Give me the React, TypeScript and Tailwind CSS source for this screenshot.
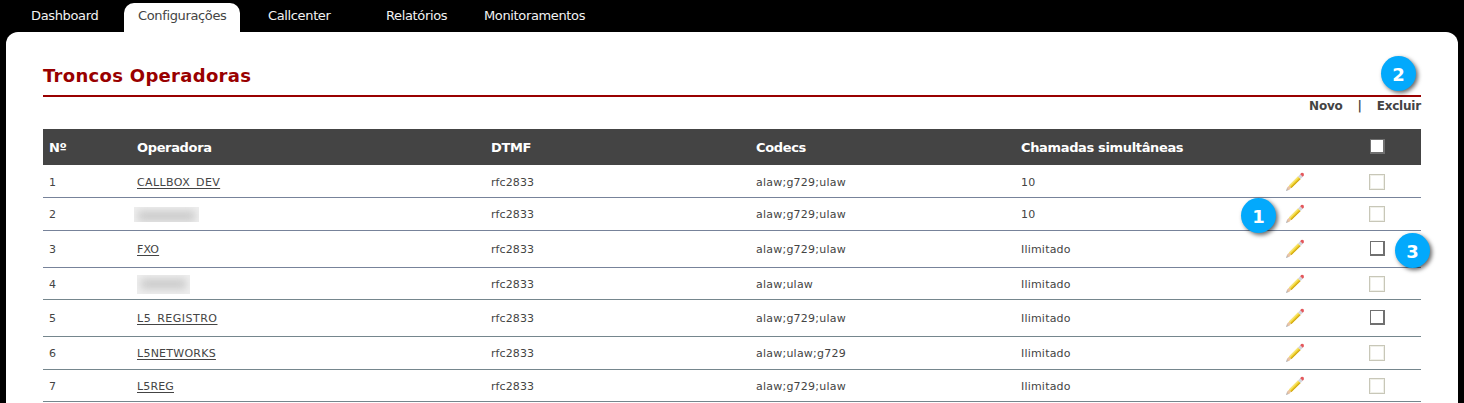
import clsx from "clsx";

interface Trunk {
  id: number;
  name: string | null;
  nameClass: string;
  codecs: string;
  calls: string;
  removable: boolean;
  rowClass: string;
}

const trunks: Trunk[] = [
  { id: 1, name: "CALLBOX_DEV", nameClass: "tracking-[0.4px]", codecs: "alaw;g729;ulaw", calls: "10", removable: false, rowClass: "h-[33px] pt-[2px] border-[#77839a]" },
  { id: 2, name: null, nameClass: "-mt-0.5 -ml-[3px] h-[15px] w-[65px]", codecs: "alaw;g729;ulaw", calls: "10", removable: false, rowClass: "h-[33px] border-[#77839a]" },
  { id: 3, name: "FXO", nameClass: "tracking-[0.1px]", codecs: "alaw;g729;ulaw", calls: "Ilimitado", removable: true, rowClass: "h-[37px] border-[#77839a]" },
  { id: 4, name: null, nameClass: "h-[19px] w-[53px]", codecs: "alaw;ulaw", calls: "Ilimitado", removable: false, rowClass: "h-8 border-[#75868d]" },
  { id: 5, name: "L5_REGISTRO", nameClass: "tracking-[0.5px]", codecs: "alaw;g729;ulaw", calls: "Ilimitado", removable: true, rowClass: "h-[37px] border-[#75868d]" },
  { id: 6, name: "L5NETWORKS", nameClass: "tracking-[0.25px]", codecs: "alaw;ulaw;g729", calls: "Ilimitado", removable: false, rowClass: "h-[33px] border-[#75868d]" },
  { id: 7, name: "L5REG", nameClass: "tracking-[0.15px]", codecs: "alaw;g729;ulaw", calls: "Ilimitado", removable: false, rowClass: "h-8 border-[#75868d]" },
];

const columns = "grid grid-cols-[88px_354px_265px_265px_265px_53px_88px] items-center";

function PencilIcon() {
  return (
    <svg width="20" height="20" viewBox="0 0 20 20" className="-ml-px">
      <path d="M1 19 2.2 15.6 4.4 17.8Z" fill="#aaa9aa" />
      <path d="M2.2 15.6 4.2 13.4 6.4 15.6 4.4 17.8 2.5 18Z" fill="#eac4a4" />
      <path d="M4 13.6 13 4.4 15.6 7 6.4 16Z" fill="#f0d22c" />
      <path d="M4 13.6 13 4.4 13.8 5.2 4.8 14.4Z" fill="#f8e77c" />
      <path d="M5.7 15.3 14.9 6.3 15.6 7 6.4 16Z" fill="#cfa414" />
      <path d="M13 4.4 15.4 2 18 4.6 15.6 7Z" fill="#d3d5dc" />
      <path d="M15.2 2.2Q16.6.2 18.6 1.2Q19.8 3.2 17.8 4.8Z" fill="#e4585c" />
    </svg>
  );
}

function Checkbox({ enabled }: { enabled: boolean }) {
  return (
    <span
      role="checkbox"
      aria-checked="false"
      aria-disabled={!enabled}
      className={clsx(
        "block bg-white",
        enabled
          ? "mb-px ml-px size-[15px] border border-r-2 border-b-2 border-[#707070]"
          : "size-4 border border-[#c8c7b8] shadow-[inset_0_0_0_1px_#f0f0e9]"
      )}
    />
  );
}

function Badge({ label, className }: { label: string; className: string }) {
  return (
    <span
      className={clsx(
        "absolute flex size-[35px] items-center justify-center rounded-full bg-[#03a9fc] pt-px text-[18px] font-bold text-white shadow-[2px_2px_4px_rgba(0,0,0,0.6)]",
        className
      )}
    >
      {label}
    </span>
  );
}

export default function App() {
  return (
    <div className="relative h-[403px] w-[1464px] overflow-hidden bg-black font-['DejaVu_Sans',sans-serif] text-[#444]">
      {/* Tabs */}
      <nav className="flex h-8 items-end pl-[31px] text-[13px] leading-[18px] tracking-[-0.36px] text-[#f2f2f2]">
        <a className="w-[93px] pb-[7px]">Dashboard</a>
        <a className="h-[29px] w-[116px] rounded-t-[10px] bg-white pt-[4px] pl-[14px] text-[#444]">
          Configurações
        </a>
        <a className="w-[146px] pb-[7px] pl-7">Callcenter</a>
        <a className="w-[98px] pb-[7px]">Relatórios</a>
        <a className="pb-[7px]">Monitoramentos</a>
      </nav>

      {/* Panel */}
      <main className="mx-1.5 h-[371px] rounded-t-[12px] bg-white px-[37px] pt-8">
        <h1 className="h-[33px] border-b-2 border-[#900] text-[18px] leading-[23px] font-bold tracking-[0.3px] text-[#900]">
          Troncos Operadoras
        </h1>
        <div className="flex h-8 justify-end text-[12px] leading-[18px] font-bold tracking-[-0.2px]">
          <a>Novo</a>
          <span className="w-[34px] text-center">|</span>
          <a>Excluir</a>
        </div>

        <div className={clsx(columns, "h-9 bg-[#444] text-[13px] font-bold tracking-[-0.35px] text-white")}>
          <span className="pt-0.5 pl-1.5">Nº</span>
          <span className="pt-0.5 pl-1.5">Operadora</span>
          <span className="pt-0.5 pl-1.5">DTMF</span>
          <span className="pt-0.5 pl-1.5">Codecs</span>
          <span className="pt-0.5 pl-1.5">Chamadas simultâneas</span>
          <span />
          <span className="flex justify-center">
            <Checkbox enabled />
          </span>
        </div>

        {trunks.map((trunk) => (
          <div key={trunk.id} className={clsx(columns, "border-b text-[11px] leading-[16px]", trunk.rowClass)}>
            <span className="pt-0.5 pl-1.5">{trunk.id}</span>
            <span className="pt-0.5 pl-1.5">
              {trunk.name ? (
                <a className={clsx("underline underline-offset-2", trunk.nameClass)}>{trunk.name}</a>
              ) : (
                <span className={clsx("block overflow-hidden bg-[#efefef]", trunk.nameClass)}>
                  <span className="mx-1 mt-1 block h-2.5 bg-[#c8c8c8] blur-[4px]" />
                </span>
              )}
            </span>
            <span className="pt-0.5 pl-1.5 tracking-[0.1px]">rfc2833</span>
            <span className="pt-0.5 pl-1.5 tracking-[0.23px]">{trunk.codecs}</span>
            <span className="pt-0.5 pl-1.5 tracking-[0.2px]">{trunk.calls}</span>
            <span className="pl-1.5">
              <PencilIcon />
            </span>
            <span className="flex justify-center">
              <Checkbox enabled={trunk.removable} />
            </span>
          </div>
        ))}
      </main>

      {/* Step markers */}
      <Badge label="1" className="top-[198px] left-[1241px]" />
      <Badge label="2" className="top-14 left-[1381px]" />
      <Badge label="3" className="top-[233px] left-[1395px]" />
    </div>
  );
}
